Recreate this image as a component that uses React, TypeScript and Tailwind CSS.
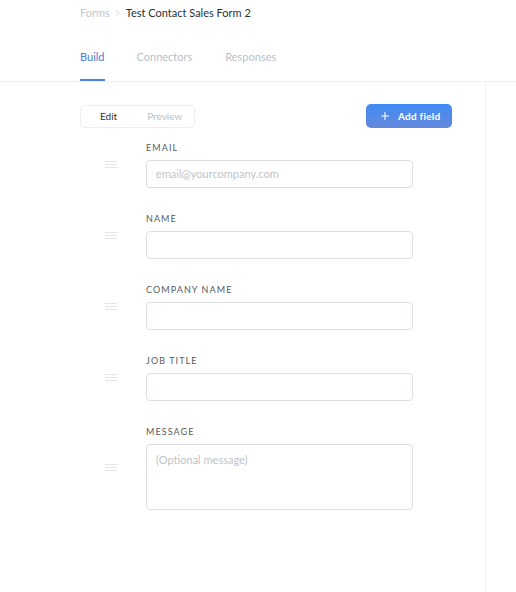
import { Plus, ChevronRight } from "lucide-react";

const fields = [
  { label: "Email", placeholder: "email@yourcompany.com" },
  { label: "Name", placeholder: "" },
  { label: "Company Name", placeholder: "" },
  { label: "Job Title", placeholder: "" },
];

function Handle() {
  return (
    <div className="flex flex-col gap-[2px] w-[12px]">
      <span className="h-px bg-[#e4e6ea]" />
      <span className="h-px bg-[#e4e6ea]" />
      <span className="h-px bg-[#e4e6ea]" />
    </div>
  );
}

export default function App() {
  return (
    <div className="w-[516px] h-[592px] bg-white overflow-hidden font-['Lato','Liberation_Sans',sans-serif] text-[#333]">
      {/* Header */}
      <div className="pl-[80px] border-b border-[#eeeff1]">
        <div className="flex items-center gap-[3px] h-[26px] text-[11px]">
          <span className="text-[#c3c7ce]">Forms</span>
          <ChevronRight className="w-[10px] h-[10px] text-[#c3c7ce]" strokeWidth={1.5} />
          <span className="text-[#2b2f36]">Test Contact Sales Form 2</span>
        </div>
        <div className="flex gap-[32px] mt-[22px] text-[11px]">
          <div className="flex flex-col">
            <span className="text-[#4a7ddc] leading-[18px]">Build</span>
            <span className="h-[2px] mt-[13px] bg-[#4f84e2]" />
          </div>
          <span className="text-[#b8bfca] leading-[18px]">Connectors</span>
          <span className="text-[#b8bfca] leading-[18px] ml-[1px]">Responses</span>
        </div>
      </div>

      {/* Body */}
      <div className="flex h-full">
        <div className="w-[486px] border-r border-[#f0f1f3] pt-[22px] pl-[80px] pr-[33px]">
          <div className="flex items-center justify-between">
            <div className="flex items-center w-[115px] h-[23px] border border-[#eceef1] rounded-[5px] text-[10px]">
              <span className="ml-[19px] text-[#2b2f36]">Edit</span>
              <span className="ml-[30px] text-[#b8bfca]">Preview</span>
            </div>
            <button className="flex items-center gap-[7px] h-[24px] w-[86px] pl-[13px] rounded-[5px] bg-gradient-to-b from-[#3d8bf4] to-[#6487dc] text-white text-[10px] font-bold tracking-wide">
              <Plus className="w-[12px] h-[12px]" strokeWidth={2.2} />
              Add field
            </button>
          </div>

          <div className="mt-[12px] flex flex-col gap-[23px]">
            {fields.map((f) => (
              <div key={f.label} className="flex items-center">
                <div className="w-[66px] pl-[25px]">
                  <Handle />
                </div>
                <div className="flex-1 pr-[39px]">
                  <div className="h-[15px] leading-[16px] mb-[5px] text-[9px] uppercase tracking-[0.12em] text-[#555a62]">
                    {f.label}
                  </div>
                  <div className="h-[28px] border border-[#dcdfe3] rounded-[4px] flex items-center pl-[9px] text-[11px] text-[#c0c4ca]">
                    {f.placeholder}
                  </div>
                </div>
              </div>
            ))}
            <div className="flex items-center">
              <div className="w-[66px] pl-[25px]">
                <Handle />
              </div>
              <div className="flex-1 pr-[39px]">
                <div className="h-[15px] leading-[16px] mb-[5px] text-[9px] uppercase tracking-[0.12em] text-[#555a62]">
                  Message
                </div>
                <div className="h-[66px] border border-[#dcdfe3] rounded-[4px] pl-[9px] pt-[7px] text-[11px] text-[#c0c4ca]">
                  (Optional message)
                </div>
              </div>
            </div>
          </div>
        </div>
        <div className="flex-1" />
      </div>
    </div>
  );
}
